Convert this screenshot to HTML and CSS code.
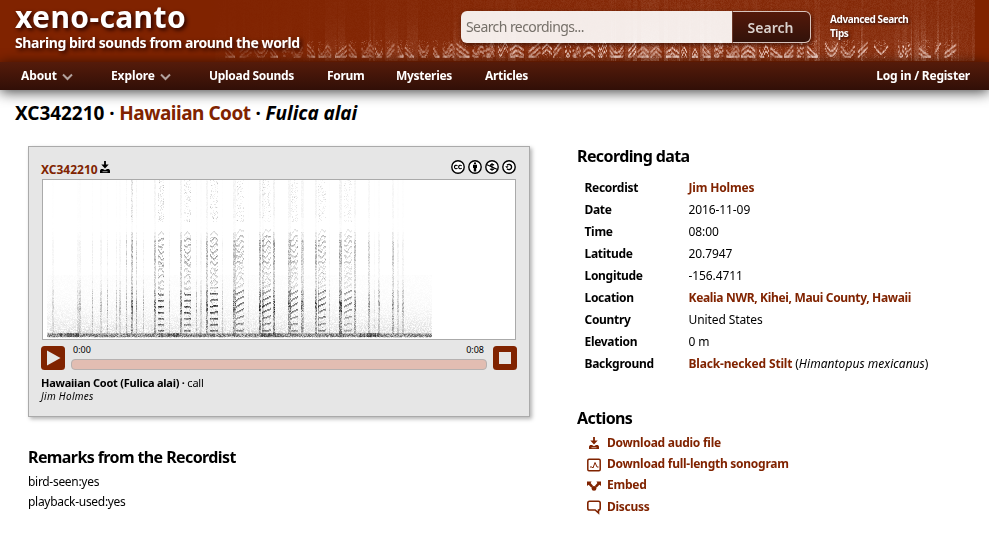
FILE: index.html
```
<!DOCTYPE html>
<html lang="en">
<head>
<meta charset="utf-8">
<title>XC342210 Hawaiian Coot (Fulica alai) :: xeno-canto</title>
<link rel="stylesheet" href="styles.css">
</head>
<body>
<svg class="defs" width="0" height="0">
  <symbol id="chevron" viewBox="0 0 11 8"><path d="M1 1.5l4.5 4.5L10 1.5" fill="none" stroke="currentColor" stroke-width="2"/></symbol>
  <symbol id="download" viewBox="0 0 14 14"><path d="M6.1 1h1.8v3.6h2.8L7 8.4 3.3 4.6h2.8zM3 9h2l2 1.3L9 9h2l1 1.5V13H2v-2.5z" fill="currentColor"/><path d="M4.5 11.7h5" stroke="#fff" stroke-opacity=".6"/></symbol>
</svg>
<header class="header">
  <canvas id="banner" class="banner" width="989" height="62"></canvas>
  <div class="brand">
    <div class="logo">xeno-canto</div>
    <div class="tagline">Sharing bird sounds from around the world</div>
  </div>
  <form class="search">
    <input class="query" type="text" placeholder="Search recordings..."><button class="go" type="button">Search</button>
  </form>
  <div class="tips"><a>Advanced Search</a><a>Tips</a></div>
</header>
<nav class="nav">
  <a class="menu">About <svg class="chev"><use href="#chevron"/></svg></a>
  <a class="menu explore">Explore <svg class="chev"><use href="#chevron"/></svg></a>
  <a class="upload">Upload Sounds</a>
  <a class="forum">Forum</a>
  <a class="mysteries">Mysteries</a>
  <a>Articles</a>
  <a class="login">Log in / Register</a>
</nav>
<h1><span class="xc">XC342210 ·</span> <a>Hawaiian Coot</a> · <i>Fulica alai</i></h1>
<main class="columns">
  <div class="left">
    <section class="player">
      <div class="top">
        <a class="id">XC342210</a><svg class="dl"><use href="#download"/></svg>
        <div class="cc">
          <svg viewBox="0 0 14 14"><circle cx="7" cy="7" r="6.2"/><path d="M6.5 5.8C5.3 4.7 3.4 5.4 3.4 7s1.9 2.3 3.1 1.2M10.7 5.8C9.5 4.7 7.6 5.4 7.6 7s1.9 2.3 3.1 1.2" class="thin"/></svg>
          <svg viewBox="0 0 14 14"><circle cx="7" cy="7" r="6.2"/><circle cx="7" cy="3.3" r="1.1" class="solid"/><path d="M5 4.8h4V8H8.2v3.6H5.8V8H5z" class="solid"/></svg>
          <svg viewBox="0 0 14 14"><circle cx="7" cy="7" r="6.2"/><path d="M9 5.2C8.4 4 5.4 4 5.3 5.6c0 1.7 3.9 1.1 3.8 2.9-.1 1.6-3.3 1.5-4.1.2M7 3v8M1.4 4.4l11.2 5" class="thin"/></svg>
          <svg viewBox="0 0 14 14"><circle cx="7" cy="7" r="6.2"/><path d="M5 5.2C6.5 3.6 9.6 4.4 9.6 7S6.5 10.4 5 8.8"/><path d="M3.2 6.2h3.4L4.9 8.2z" class="solid"/></svg>
        </div>
      </div>
      <canvas id="sonogram" class="sonogram" width="472" height="159"></canvas>
      <div class="controls">
        <svg class="btn" viewBox="0 0 24 24"><rect width="24" height="24" rx="3.5"/><path d="M6 4.5v15L19.5 12z"/></svg>
        <div class="progress">
          <div class="times"><span>0:00</span><span>0:08</span></div>
          <div class="bar"></div>
        </div>
        <svg class="btn" viewBox="0 0 24 24"><rect width="24" height="24" rx="3.5"/><path d="M6 6h12v12H6z"/></svg>
      </div>
      <div class="title"><b>Hawaiian Coot (Fulica alai) ·</b> call</div>
      <div class="author">Jim Holmes</div>
    </section>
    <h2 class="remarks">Remarks from the Recordist</h2>
    <p>bird-seen:yes<br>playback-used:yes</p>
  </div>
  <div class="right">
    <h2>Recording data</h2>
    <dl class="data">
      <dt>Recordist</dt><dd><a class="name">Jim Holmes</a></dd>
      <dt>Date</dt><dd>2016-11-09</dd>
      <dt>Time</dt><dd>08:00</dd>
      <dt>Latitude</dt><dd>20.7947</dd>
      <dt>Longitude</dt><dd>-156.4711</dd>
      <dt>Location</dt><dd><a>Kealia NWR, Kihei, Maui County, Hawaii</a></dd>
      <dt>Country</dt><dd>United States</dd>
      <dt>Elevation</dt><dd>0 m</dd>
      <dt>Background</dt><dd><a class="name">Black-necked Stilt</a> (<i>Himantopus mexicanus</i>)</dd>
    </dl>
    <h2>Actions</h2>
    <ul class="actions">
      <li><svg viewBox="0 0 14 14"><use href="#download"/></svg><a>Download audio file</a></li>
      <li><svg viewBox="0 0 14 14"><rect x=".8" y="1.2" width="12.4" height="11.6" rx="1.2" fill="none" stroke="currentColor" stroke-width="1.5"/><path d="M3 9h2l1 1 2-5.5L10 9h1.5" fill="none" stroke="currentColor"/></svg><a>Download full-length sonogram</a></li>
      <li><svg viewBox="0 0 14 14"><path d="M0 2.5h4.6L3.6 4l2.6 3-1.7 1.7-2.9-3L0 7zM14 2.5H9.4l1 1.5-2.6 3 1.7 1.7 2.9-3L14 7z" fill="currentColor"/><circle cx="7" cy="9.4" r="2.4" fill="currentColor"/></svg><a>Embed</a></li>
      <li><svg viewBox="0 0 14 14"><path d="M2.5 1.2h9q1.7 0 1.7 1.7v5.3q0 1.8-1.7 1.8v3L8.2 10H2.5Q.8 10 .8 8.2V2.9q0-1.7 1.7-1.7z" fill="none" stroke="currentColor" stroke-width="1.6"/></svg><a>Discuss</a></li>
    </ul>
  </div>
</main>
<script src="sonograms.js"></script>
</body>
</html>
```
FILE: styles.css
```
* { box-sizing: border-box; }
body { margin: 0; background: #fff; color: #000; font: 12px/20px "Noto Sans", sans-serif; }
.defs { position: absolute; }
a { color: #802300; font-weight: 700; }
svg { display: block; flex: none; overflow: visible; }

.header { position: relative; display: flex; height: 62px; background: #802300; }
.banner { position: absolute; left: 0; top: 0; }
.brand, .search, .tips { position: relative; }
.brand { width: 461px; padding-left: 15px; color: #fff; font-weight: 700; text-shadow: 2px 2px 4px #200; }
.logo { font-size: 30px; line-height: 33px; letter-spacing: .38px; }
.tagline { font-size: 14px; line-height: 20px; letter-spacing: -.39px; }
.search { display: flex; width: 350px; height: 32px; margin-top: 11px; border-radius: 6px; box-shadow: 1px 2px 4px rgba(30,5,0,.6); }
.query { width: 271px; padding: 0 5px 1px; border: 0; border-radius: 6px 0 0 6px; background: rgba(255,255,255,.91); font: 14px "Noto Sans", sans-serif; letter-spacing: -.58px; }
.query::placeholder { color: #757069; }
.go { width: 79px; padding: 0 2px 0 0; border: 1px solid #d8c4bd; border-left-color: #6a3829; border-radius: 0 6px 6px 0; background: linear-gradient(#54190a, #32120a); color: #dbd2ce; font: 600 14px "Noto Sans", sans-serif; }
.tips { display: flex; flex-direction: column; margin: 12px 0 0 19px; text-shadow: 1px 1px 3px #200; }
.tips a { color: #fff; font-size: 10px; line-height: 14px; letter-spacing: -.43px; }

.nav { position: relative; display: flex; height: 28px; padding: 0 19px 0 21px; background: linear-gradient(#551b0a, #310f07); box-shadow: 0 2px 14px rgba(0,0,0,.75); }
.nav a { display: flex; height: 28px; align-items: center; margin-right: 33px; color: #fff; letter-spacing: -.3px; white-space: nowrap; }
.nav .menu { width: 52px; margin-right: 38px; justify-content: space-between; letter-spacing: -.1px; }
.nav .explore { width: 60px; }
.nav .upload { width: 85px; letter-spacing: -.3px; }
.nav .forum { width: 36px; }
.nav .mysteries { width: 56px; }
.nav .login { margin: 0 0 0 auto; letter-spacing: -.22px; }
.chev { width: 11px; height: 8px; margin-top: 2px; color: #b3a29d; }

h1 { margin: 11px 0 0 15px; font-size: 19px; line-height: 24px; font-weight: 700; letter-spacing: -.1px; }
h1 .xc { letter-spacing: -.06px; }
h1 a { letter-spacing: -.5px; }
h1 i { letter-spacing: -.05px; }
h2 { margin: 0; font-size: 16px; line-height: 20px; letter-spacing: -.6px; }

.columns { display: flex; margin-top: 21px; }
.left { width: 550px; padding-left: 28px; }
.left p { margin: 5px 0 0; letter-spacing: -.3px; }
.remarks { margin-top: 30px; }
.player { width: 502px; height: 271px; padding: 12px; border: 1px solid #aaa; background: #e6e6e6; box-shadow: 2px 2px 4px rgba(0,0,0,.3); }
.top { display: flex; height: 20px; }
.id { line-height: 22px; }
.dl { width: 14px; height: 14px; margin-top: 1px; }
.cc { display: flex; gap: 3px; margin: 1px 1px 0 auto; }
.cc svg { width: 14px; height: 14px; fill: #fff; stroke: #000; stroke-width: 1.4; }
.cc path { fill: none; }
.cc .thin { stroke-width: 1.1; }
.cc .solid { fill: #000; stroke: none; }
.sonogram { display: block; width: 474px; height: 161px; margin-left: 1px; border: 1px solid #aaa; background: #fff; }
.controls { display: flex; margin-top: 6px; }
.btn { width: 24px; height: 24px; fill: #802300; }
.btn path { fill: #e6e6e6; }
.progress { width: 416px; margin: 0 6px; }
.times { display: flex; justify-content: space-between; height: 13px; padding: 0 3px 0 2px; font-size: 9px; line-height: 8px; }
.bar { height: 11px; border: 1px solid #b6b1b0; border-radius: 4px; background: #e2bdb2; }
.title { margin-top: 5px; font-size: 11px; line-height: 16px; letter-spacing: -.24px; }
.author { font-size: 10px; line-height: 11px; font-style: italic; letter-spacing: .3px; }

.right { padding-left: 27px; }
.data { display: grid; grid-template-columns: 104px auto; margin: 11px 0 33px 7.5px; line-height: 22px; letter-spacing: -.1px; }
dt { font-weight: 700; letter-spacing: -.3px; }
dd { margin: 0; white-space: nowrap; }
dd a { letter-spacing: -.33px; }
dd i { letter-spacing: .04px; }
dd .name { letter-spacing: -.17px; }
.actions { margin: 4px 0 0 10px; padding: 0; list-style: none; color: #802300; letter-spacing: -.26px; }
.actions li { display: flex; align-items: center; gap: 6px; height: 21.4px; }
.actions svg { width: 14px; height: 14px; margin-top: 1px; }
```
FILE: sonograms.js
```
let seed = 11;
function rnd() { seed = (seed * 1664525 + 1013904223) % 4294967296; return seed / 4294967296; }

// Recording sonogram
const s = document.getElementById('sonogram').getContext('2d');
function dot(x, y, a, w = 1, h = 1) { s.fillStyle = `rgba(0,0,0,${a})`; s.fillRect(x, y, w, h); }

// background noise, denser near the floor
for (let x = 4; x < 389; x++) {
  for (let y = 95; y < 158; y++) {
    const d = (y - 95) / 63;
    dot(x, y, rnd() * (0.015 + 0.19 * d * d * d));
  }
  for (let y = 153; y < 157; y++) dot(x, y, (y < 154 ? 0.2 : 0.5) * rnd() + 0.12);
  if (Math.sin(x / 16) > 0.8) dot(x, 153, 0.5 * rnd(), 1, 4);
}

// vertical strokes: x, width, strength
const strokes = [
  [9, 2, .16], [34, 2, .17], [36, 2, .25], [49, 1, .3], [57, 2, .22], [64, 1, .3], [73, 1, .25], [76, 2, .22], [83, 1, .35], [88, 2, .42], [93, 1, .4],
  [100, 1, .28], [111, 2, .5], [126, 1, .22], [137, 2, .52], [153, 1, .3], [157, 2, .2], [163, 2, .55], [179, 1, .25], [190, 3, .52],
  [205, 1, .1], [216, 2, .62], [219, 2, .35], [230, 2, .65], [245, 3, .54], [258, 2, .5], [260, 1, .35],
  [272, 2, .55], [275, 1, .3], [286, 1, .2], [296, 3, .6], [311, 2, .45], [325, 2, .35], [331, 1, .13], [335, 2, .3],
  [349, 2, .4], [354, 2, .22], [359, 2, .25]
];
for (const [x, w, a] of strokes) {
  for (let y = 0; y < 154; y++) {
    let k = y < 52 ? (y < 38 ? .08 : .03) : y < 60 ? .2 : y < 85 ? .5 : y < 110 ? .34 : .68;
    if (y > 120 && y < 132) k = 1;
    if (a < .35 && y < 100) k *= .4;
    for (let i = 0; i < w; i++) dot(x + i, y, a * k * (.25 + rnd() * 1.15));
  }
}

// harmonic stacks: x, width, slope, strength
const stacks = [[88, 2, 0, .6], [115, 6, .15, .95], [141, 7, .15, .9], [167, 8, -.05, .95], [193, 8, -.55, .72],
  [219, 9, -.5, .75], [248, 7, -.55, .7], [275, 8, -.5, .7], [301, 8, -.5, .55]];
for (const [x, w, slope, a] of stacks) {
  for (let n = 0; n < 17; n++) {
    const y0 = 150 - n * 6.1;
    const strength = n < 2 ? .7 : n < 7 ? 1 - Math.abs(n - 4) * .12 : n < 11 ? .25 : n < 16 ? .42 : .2;
    for (let i = 0; i < w; i++) {
      const wave = n > 7 ? Math.sin((i + n) * .9) * 1.6 : 0;
      const y = Math.round(y0 + slope * i * Math.min(1, n / 4 + .15) + wave);
      dot(x + i, y, a * strength * (.5 + rnd() * .5), 1, 1);
      dot(x + i, y + 1, a * strength * (.25 + rnd() * .45), 1, 1);
    }
  }
  for (let i = 0; i < 110; i++) dot(x + rnd() * w | 0, rnd() * 42 | 0, a * .15 * rnd());
  for (let i = 0; i < w * 35; i++) dot(x + rnd() * w | 0, 56 + rnd() * 96 | 0, a * .18 * rnd());
}

// Banner sonogram
const b = document.getElementById('banner').getContext('2d');
function glow(x, y, a, w = 1, h = 1) { b.fillStyle = `rgba(255,225,215,${a})`; b.fillRect(x, y, w, h); }
let column = 0;
for (let x = 200; x < 975; x++) {
  const ramp = Math.min(1, (x - 200) / 450);
  if (rnd() < .3) column = rnd() < .4 ? rnd() : rnd() * .3;
  for (let y = 0; y < 61; y++) {
    const low = Math.max(0, (y - 14) / 44);
    glow(x, y, ramp * (.02 + .08 * rnd() + column * (.06 + .3 * low) * (.4 + rnd() * .7)));
  }
}
// call syllables along the lower edge
let cx = 225;
while (cx < 962) {
  const ramp = Math.min(1, .2 + (cx - 225) / 380);
  const w = 5 + rnd() * 9 | 0;
  const rows = cx < 820 ? 2 + (rnd() * 2 | 0) : 1 + (rnd() * 2 | 0);
  const kind = rnd() * 5 | 0;
  const top = 43 + rnd() * 5;
  for (let n = 0; n < rows; n++) {
    for (let i = 0; i <= w; i++) {
      const t = i / w;
      const v = [Math.sin(t * Math.PI) * 7, t * 9, Math.sin(t * 6.3) * 4 + 2, 7 - t * 9, Math.abs(t - .5) * 10][kind];
      const y = Math.min(56, top + n * 5 + v);
      const a = ramp * (.4 + rnd() * .55);
      glow(cx + i, Math.round(y), a, 1, 1);
      glow(cx + i, Math.round(y) + 1, a * .9, 1, 1);
      glow(cx + i, Math.round(y) - 1, a * .35, 1, 1);
    }
  }
  for (let i = 0; i < w * 8; i++) glow(cx + rnd() * w | 0, 40 + rnd() * 18 | 0, ramp * .25 * rnd());
  cx += w + 2 + rnd() * (cx > 800 ? 11 : 4);
}
```
